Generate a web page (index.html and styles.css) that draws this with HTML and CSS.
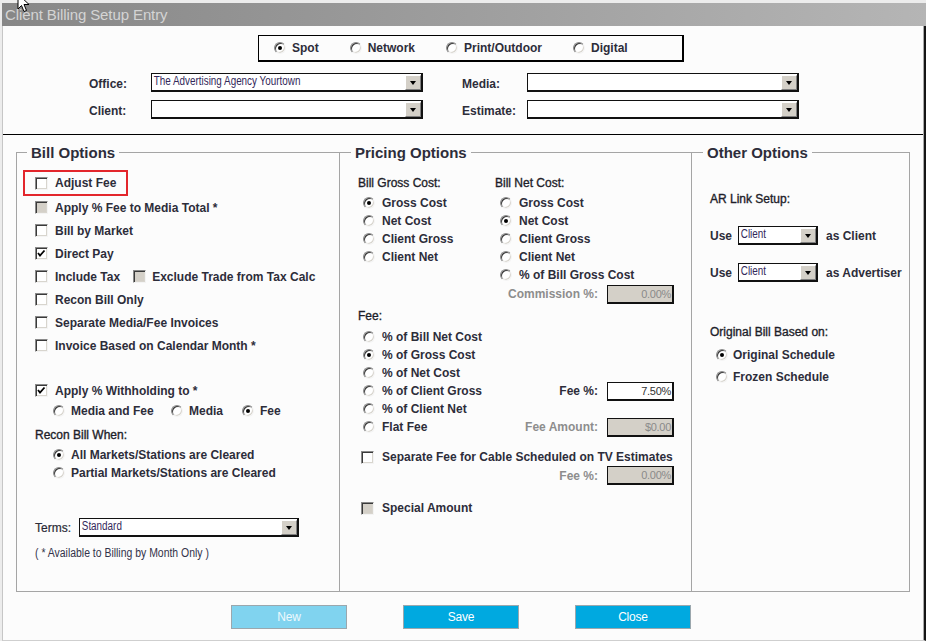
FILE: index.html
```html
<!DOCTYPE html>
<html>
<head>
<meta charset="utf-8">
<link rel="stylesheet" href="styles.css">
</head>
<body>
<div class="window">
  <div class="titlebar">Client Billing Setup Entry</div>
  <div class="body">
    <div class="mediabox">
      <div class="opt"><span class="radio on"></span>Spot</div>
      <div class="opt"><span class="radio"></span>Network</div>
      <div class="opt"><span class="radio"></span>Print/Outdoor</div>
      <div class="opt"><span class="radio"></span>Digital</div>
    </div>
    <div class="fields">
      <span class="flabel">Office:</span>
      <div class="select"><span class="sval">The Advertising Agency Yourtown</span><span class="dd"></span></div>
      <span class="flabel r">Media:</span>
      <div class="select"><span class="sval"></span><span class="dd"></span></div>
      <span class="flabel">Client:</span>
      <div class="select"><span class="sval"></span><span class="dd"></span></div>
      <span class="flabel r">Estimate:</span>
      <div class="select"><span class="sval"></span><span class="dd"></span></div>
    </div>
    <div class="sep"></div>
    <div class="sections">
      <section class="col bill">
        <div class="legend"><span>Bill Options</span></div>
        <div class="list">
          <div class="row hl"><span class="cb"></span>Adjust Fee</div>
          <div class="row"><span class="cb dis"></span>Apply % Fee to Media Total *</div>
          <div class="row"><span class="cb"></span>Bill by Market</div>
          <div class="row"><span class="cb"><svg width="11" height="11" viewBox="0 0 11 11"><polyline points="2,5 4,7.5 8.5,2.5" fill="none" stroke="#000" stroke-width="1.8"/></svg></span>Direct Pay</div>
          <div class="row"><span class="cb"></span>Include Tax<span class="cb dis second"></span>Exclude Trade from Tax Calc</div>
          <div class="row"><span class="cb"></span>Recon Bill Only</div>
          <div class="row"><span class="cb"></span>Separate Media/Fee Invoices</div>
          <div class="row"><span class="cb"></span>Invoice Based on Calendar Month *</div>
          <div class="row withhold"><span class="cb"><svg width="11" height="11" viewBox="0 0 11 11"><polyline points="2,5 4,7.5 8.5,2.5" fill="none" stroke="#000" stroke-width="1.8"/></svg></span>Apply % Withholding to *</div>
          <div class="sub">
            <div class="opt w1"><span class="radio"></span>Media and Fee</div>
            <div class="opt w2"><span class="radio"></span>Media</div>
            <div class="opt"><span class="radio on"></span>Fee</div>
          </div>
          <div class="head recon">Recon Bill When:</div>
          <div class="sub"><div class="opt"><span class="radio on"></span>All Markets/Stations are Cleared</div></div>
          <div class="sub"><div class="opt"><span class="radio"></span>Partial Markets/Stations are Cleared</div></div>
          <div class="terms"><span class="tlabel">Terms:</span><div class="select tsel"><span class="sval">Standard</span><span class="dd"></span></div></div>
          <div class="note">( * Available to Billing by Month Only )</div>
        </div>
      </section>
      <section class="col pricing">
        <div class="legend"><span>Pricing Options</span></div>
        <div class="pc">
          <div class="pgrid">
            <div class="pcol">
              <div class="head">Bill Gross Cost:</div>
              <div class="prow"><span class="radio on"></span>Gross Cost</div>
              <div class="prow"><span class="radio"></span>Net Cost</div>
              <div class="prow"><span class="radio"></span>Client Gross</div>
              <div class="prow"><span class="radio"></span>Client Net</div>
            </div>
            <div class="pcol">
              <div class="head">Bill Net Cost:</div>
              <div class="prow"><span class="radio"></span>Gross Cost</div>
              <div class="prow"><span class="radio on"></span>Net Cost</div>
              <div class="prow"><span class="radio"></span>Client Gross</div>
              <div class="prow"><span class="radio"></span>Client Net</div>
              <div class="prow"><span class="radio"></span>% of Bill Gross Cost</div>
            </div>
          </div>
          <div class="frow"><span class="glabel">Commission %:</span><span class="num dis">0.00%</span></div>
          <div class="head fee">Fee:</div>
          <div class="prow"><span class="radio"></span>% of Bill Net Cost</div>
          <div class="prow"><span class="radio on"></span>% of Gross Cost</div>
          <div class="prow"><span class="radio"></span>% of Net Cost</div>
          <div class="prow"><span class="radio"></span>% of Client Gross<span class="rt"><span class="blabel">Fee %:</span><span class="num">7.50%</span></span></div>
          <div class="prow"><span class="radio"></span>% of Client Net</div>
          <div class="prow"><span class="radio"></span>Flat Fee<span class="rt"><span class="glabel">Fee Amount:</span><span class="num dis">$0.00</span></span></div>
          <div class="prow cbrow sepfee"><span class="cb"></span>Separate Fee for Cable Scheduled on TV Estimates</div>
          <div class="frow fee2"><span class="glabel">Fee %:</span><span class="num dis">0.00%</span></div>
          <div class="prow cbrow special"><span class="cb dis"></span>Special Amount</div>
        </div>
      </section>
      <section class="col other">
        <div class="legend"><span>Other Options</span></div>
        <div class="oc">
          <div class="head">AR Link Setup:</div>
          <div class="urow">Use<div class="select usel"><span class="sval">Client</span><span class="dd"></span></div>as Client</div>
          <div class="urow">Use<div class="select usel"><span class="sval">Client</span><span class="dd"></span></div>as Advertiser</div>
          <div class="head orig">Original Bill Based on:</div>
          <div class="orow first"><span class="radio on"></span>Original Schedule</div>
          <div class="orow"><span class="radio"></span>Frozen Schedule</div>
        </div>
      </section>
    </div>
    <div class="buttons">
      <div class="btn dis">New</div>
      <div class="btn">Save</div>
      <div class="btn">Close</div>
    </div>
  </div>
</div>
<svg class="cursor" width="14" height="21" viewBox="0 0 14 21"><path d="M1 1 L1 16 L4.5 12.5 L7 18.5 L9.5 17.5 L7 11.5 L12 11.5 Z" fill="#fff" stroke="#000" stroke-width="1"/></svg>
</body>
</html>
```
FILE: styles.css
```css
* { box-sizing: border-box; }
html, body { margin: 0; }
body {
  background: #ececec;
  font-family: "Liberation Sans", Arial, sans-serif;
  font-size: 12px;
  color: #2d2d3a;
  width: 926px;
  height: 641px;
  overflow: hidden;
  position: relative;
}
.window { margin-left: 2px; padding-top: 3px; width: 924px; }
.titlebar {
  height: 23px;
  background: linear-gradient(to right, #878787, #a0a0a0 55%, #b5b5b5);
  color: #d4d4d4;
  font-size: 15px;
  line-height: 23px;
  padding-left: 3px;
  letter-spacing: -0.1px;
}
.body {
  height: 615px;
  background: #fcfcfc;
  border-left: 1px solid #c6c6c6;
  border-right: 2px solid #151515;
  border-bottom: 1px solid #cfcfcf;
  box-shadow: inset -1px 0 #a9a9a9;
  padding-top: 9px;
}
.mediabox {
  margin-left: 255px;
  width: 426px;
  height: 27px;
  border: 1px solid #000;
  border-right-width: 2px;
  border-bottom-width: 2px;
  display: flex;
  align-items: center;
  padding-left: 15px;
  gap: 31px;
  font-weight: bold;
}
.opt { display: flex; align-items: center; font-weight: bold; }
.opt .radio { margin-right: 6px; }
.radio {
  flex: none;
  width: 12px;
  height: 12px;
  border-radius: 50%;
  border: 1px solid;
  border-color: #8a8a8a #f4f4f4 #f4f4f4 #8a8a8a;
  box-shadow: inset 1px 1px #3a3a3a, inset -1px -1px #d8d5ce;
  background: #fff;
  position: relative;
}
.radio.on::after {
  content: "";
  position: absolute;
  left: 3px;
  top: 3px;
  width: 4px;
  height: 4px;
  border-radius: 50%;
  background: #000;
}
.cb {
  flex: none;
  width: 13px;
  height: 13px;
  border: 1px solid;
  border-color: #8a8a8a #f4f4f4 #f4f4f4 #8a8a8a;
  box-shadow: inset 1px 1px #3a3a3a, inset -1px -1px #d8d5ce;
  background: #fff;
  display: flex;
  align-items: center;
  justify-content: center;
  margin-right: 7px;
}
.cb.dis { background: #d4d0c8; }
.fields {
  display: grid;
  grid-template-columns: 62px 272px 104px 272px;
  row-gap: 8px;
  margin: 11px 0 0 86px;
}
.flabel { display: flex; align-items: center; font-weight: bold; padding-top: 3px; }
.flabel.r { padding-left: 39px; }
.select {
  height: 19px;
  border: 1px solid #111;
  border-right-width: 2px;
  border-bottom-width: 2px;
  background: #fff;
  display: flex;
  padding: 1px 0 0 1px;
  overflow: hidden;
}
.sval {
  flex: 1;
  font-weight: normal;
  font-size: 12.5px;
  color: #33285a;
  padding-left: 1px;
  line-height: 13px;
  white-space: nowrap;
  transform: scaleX(0.79);
  transform-origin: left center;
}
.dd {
  flex: none;
  width: 16px;
  height: 15px;
  background: #d4d0c8;
  border: 1px solid;
  border-color: #fff #808080 #808080 #fff;
  display: flex;
  align-items: center;
  justify-content: center;
  position: relative;
}
.dd::after {
  content: "";
  border-left: 3.5px solid transparent;
  border-right: 3.5px solid transparent;
  border-top: 4px solid #000;
}
.sep { height: 1px; background: #000; margin: 15px 1px 0 0; }
.sections {
  display: flex;
  margin: 17px 0 0 13px;
  width: 894px;
  height: 440px;
  border: 1px solid #a5a5a5;
}
.col { border-right: 1px solid #a5a5a5; display: flex; flex-direction: column; }
.col.bill { width: 323px; }
.col.pricing { width: 352px; }
.col.other { flex: 1; border-right: 0; }
.legend {
  height: 20px;
  margin-top: -10px;
  padding-left: 10px;
  font-size: 15px;
  font-weight: bold;
  line-height: 20px;
  color: #2d2d3a;
}
.pricing .legend, .other .legend { padding-left: 11px; }
.legend span { background: #fcfcfc; padding: 0 4px; }
.list { padding-left: 18px; }
.row { display: flex; align-items: center; height: 23px; font-weight: bold; }
.row.hl {
  margin-top: 7px;
  height: 26px;
  border: 2px solid #e3262c;
  margin-left: -12px;
  padding: 0 10px;
  width: fit-content;
}
.cb.second { margin-left: 13px; margin-right: 6px; }
.row.withhold { margin-top: 22px; }
.sub { display: flex; align-items: center; height: 18px; padding-left: 18px; }
.opt.w1 { width: 118px; }
.opt.w2 { width: 71px; }
.head {
  height: 18px;
  display: flex;
  align-items: center;
  font-weight: normal;
  color: #1e1e2a;
  -webkit-text-stroke: 0.35px #1e1e2a;
}
.head.recon { height: 22px; margin-top: 4px; }
.terms { display: flex; align-items: center; height: 19px; margin-top: 36px; }
.tlabel { margin-right: 8px; -webkit-text-stroke: 0.2px #1e1e2a; }
.tsel { width: 220px; }
.note {
  margin-top: 7px;
  height: 18px;
  line-height: 18px;
  font-size: 12px;
  color: #33334a;
  white-space: nowrap;
  transform: scaleX(0.87);
  transform-origin: left center;
}
.pc { padding: 0 17px 0 18px; margin-top: 11px; }
.pgrid { display: grid; grid-template-columns: 137px 1fr; }
.pcol .head { margin-bottom: 2px; }
.prow { height: 18px; display: flex; align-items: center; padding-left: 5px; font-weight: bold; }
.prow .radio { margin-right: 7px; }
.rt { margin-left: auto; display: flex; align-items: center; }
.frow { display: flex; justify-content: flex-end; align-items: center; height: 20px; font-weight: bold; }
.glabel { color: #8d8d8d; margin-right: 9px; font-weight: bold; }
.blabel { margin-right: 9px; font-weight: bold; }
.num {
  width: 67px;
  height: 19px;
  border: 1px solid #111;
  border-right-width: 2px;
  border-bottom-width: 2px;
  background: #fff;
  font-weight: normal;
  font-size: 11px;
  letter-spacing: -0.3px;
  text-align: right;
  padding-right: 1px;
  line-height: 16px;
  color: #333;
}
.num.dis { background: #d4d0c8; color: #8a8a8a; }
.head.fee { margin: 3px 0; }
.cbrow { padding-left: 3px; }
.cbrow .cb { margin-right: 8px; }
.sepfee { margin-top: 12px; }
.fee2 { height: 19px; }
.special { margin-top: 14px; }
.oc { padding-left: 18px; margin-top: 27px; }
.urow { display: flex; align-items: center; height: 19px; margin-top: 18px; font-weight: bold; }
.usel { width: 80px; margin: 0 8px 0 6px; }
.head.orig { margin-top: 41px; }
.orow { height: 22px; display: flex; align-items: center; padding-left: 6px; font-weight: bold; }
.orow.first { margin-top: 3px; }
.orow .radio { margin-right: 5px; }
.buttons {
  display: flex;
  justify-content: center;
  gap: 56px;
  margin-top: 13px;
  padding-right: 5px;
}
.btn {
  width: 116px;
  height: 24px;
  background: #00a9e0;
  border: 1px solid #9ba7ad;
  color: #fff;
  display: flex;
  align-items: center;
  justify-content: center;
  font-size: 12px;
  letter-spacing: -0.2px;
}
.btn.dis { background: #80d3ef; color: #eef9fd; }
.cursor { position: absolute; left: 17px; top: -7px; }
```
